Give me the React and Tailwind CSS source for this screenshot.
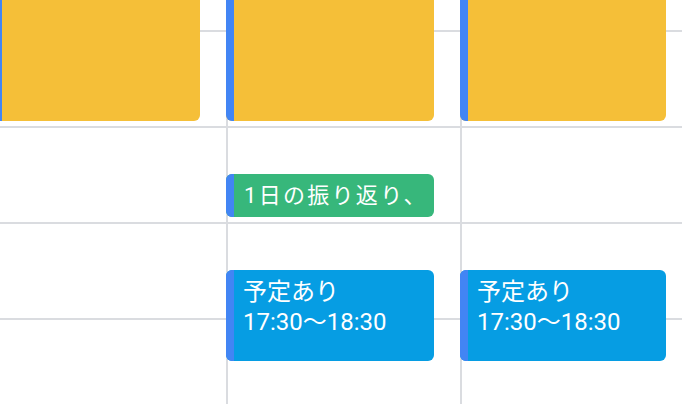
import React from 'react';

const LINE = 'border-[#dadce0]';

const columns = [
    {
        key: 'mon',
        className: '-ml-[6px] w-[232px]',
        events: [
            { id: 'y0', color: 'bg-[#f5bf38]', pos: 'left-[-2px] top-[-60px] h-[181px] w-[206px]' },
        ],
    },
    {
        key: 'tue',
        className: 'w-[234px]',
        events: [
            { id: 'y1', color: 'bg-[#f5bf38]', pos: 'left-[-2px] top-[-60px] h-[181px] w-[208px]' },
            { id: 'g1', color: 'bg-[#37b77b]', pos: 'left-[-2px] top-[174px] h-[43px] w-[208px]', title: '1日の振り返り、 明日の準備', single: true },
            { id: 'b1', color: 'bg-[#069de3]', pos: 'left-[-2px] top-[270px] h-[91px] w-[208px]', title: '予定あり', time: '17:30〜18:30' },
        ],
    },
    {
        key: 'wed',
        className: 'w-[234px]',
        events: [
            { id: 'y2', color: 'bg-[#f5bf38]', pos: 'left-[-2px] top-[-60px] h-[181px] w-[206px]' },
            { id: 'b2', color: 'bg-[#069de3]', pos: 'left-[-2px] top-[270px] h-[91px] w-[206px]', title: '予定あり', time: '17:30〜18:30' },
        ],
    },
];

const EventChip = ({ ev }) => (
    <div className={`absolute flex overflow-hidden rounded-md ${ev.pos} ${ev.color}`}>
        <div className="w-[8px] shrink-0 bg-[#4285f4]"></div>
        {ev.single && (
            <div className="flex min-w-0 items-center whitespace-pre pl-[10px] text-[22px] leading-[30px] tracking-[2.3px] text-white">
                {ev.title}
            </div>
        )}
        {ev.time && (
            <div className="min-w-0 whitespace-nowrap pl-[9px] pt-[7px] text-[24px] leading-[30px] text-white">
                <div>{ev.title}</div>
                <div>{ev.time}</div>
            </div>
        )}
    </div>
);

const App = () => {
    return (
        <div
            className="flex h-[404px] w-[682px] overflow-hidden bg-white"
            style={{ fontFamily: 'Roboto, "Noto Sans CJK JP", sans-serif' }}
        >
            {columns.map((col) => (
                <div key={col.key} className={`relative shrink-0 border-l-2 ${LINE} ${col.className}`}>
                    {/* hour rows */}
                    <div className={`h-[32px] border-b-2 ${LINE}`}></div>
                    <div className={`h-[96px] border-b-2 ${LINE}`}></div>
                    <div className={`h-[96px] border-b-2 ${LINE}`}></div>
                    <div className={`h-[96px] border-b-2 ${LINE}`}></div>
                    <div className={`h-[96px] border-b-2 ${LINE}`}></div>

                    {col.events.map((ev) => (
                        <EventChip key={ev.id} ev={ev} />
                    ))}
                </div>
            ))}
        </div>
    );
};

export default App;
